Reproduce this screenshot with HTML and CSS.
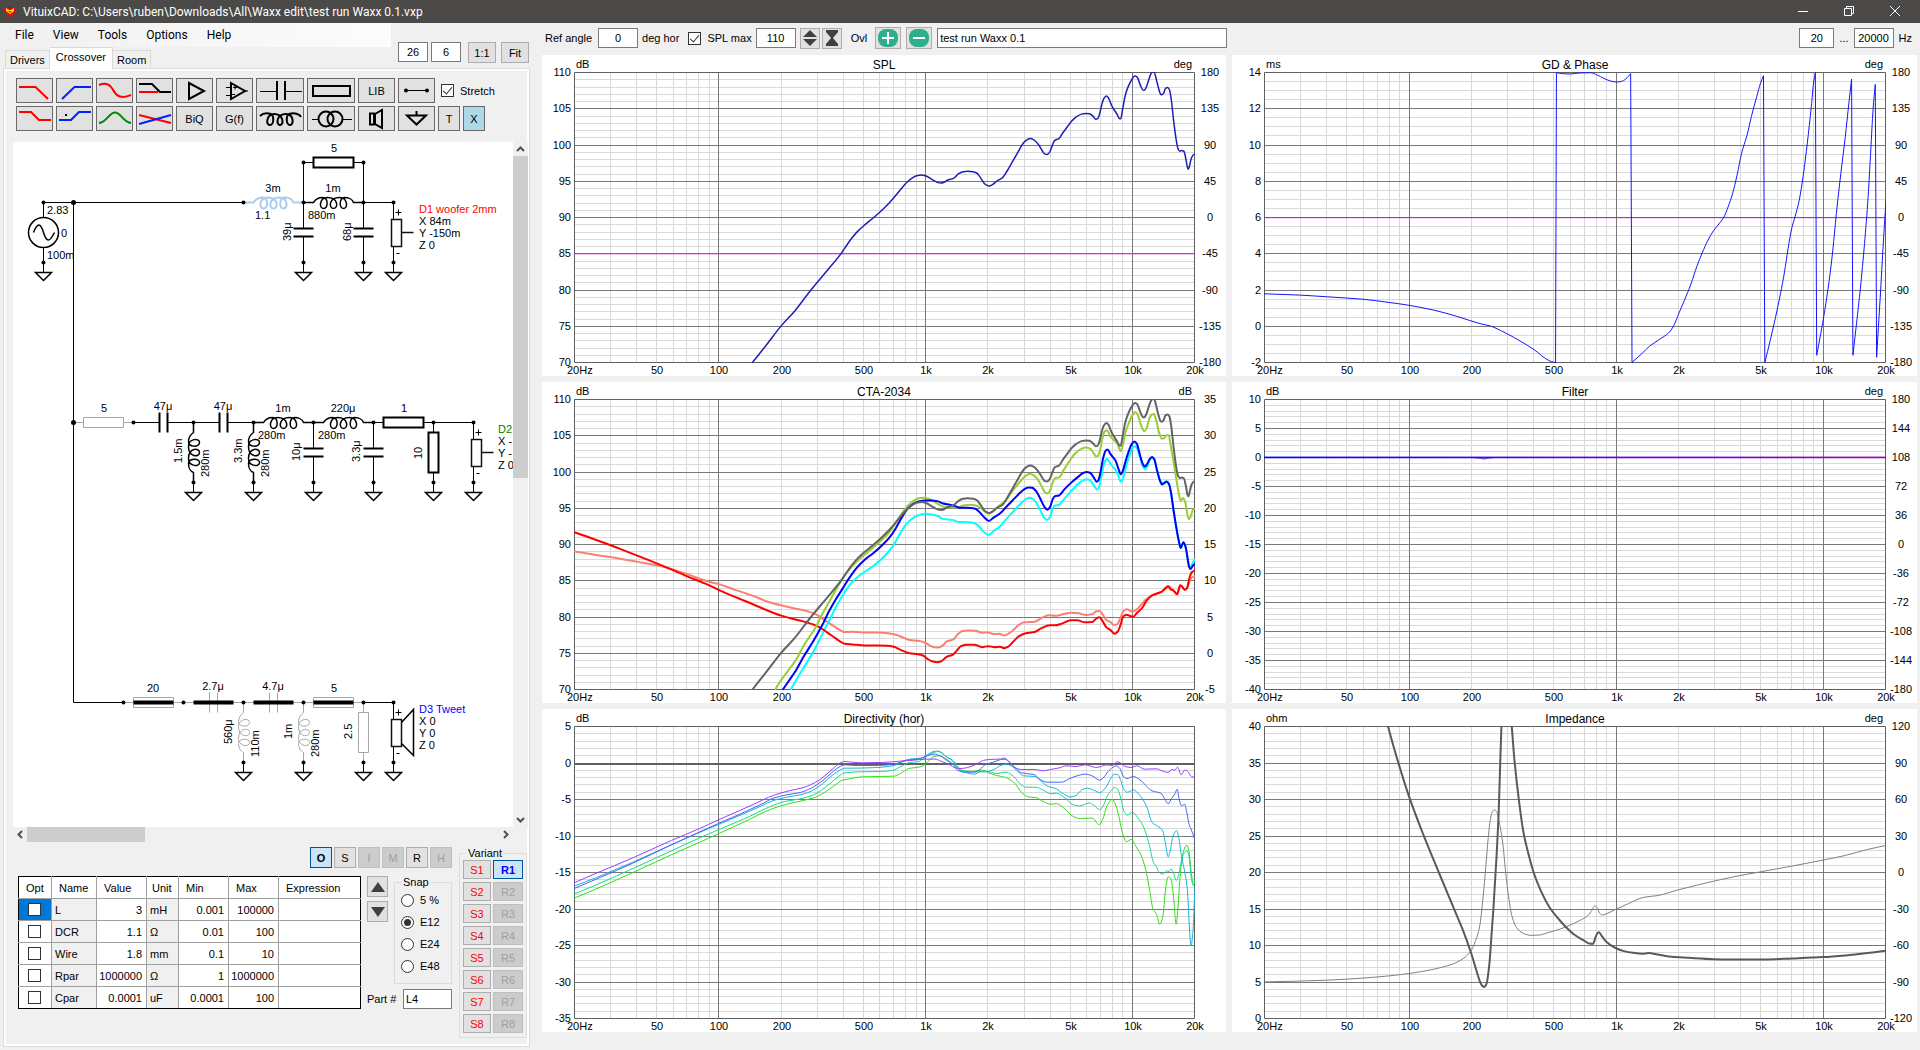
FILE: index.html
```html
<!DOCTYPE html>
<html lang="en">
<head>
<meta charset="utf-8">
<title>VituixCAD</title>
<link rel="stylesheet" href="styles.css">
</head>
<body>
<header class="titlebar">
  <svg class="logo" viewBox="0 0 14 12" width="14" height="12" aria-hidden="true"><path d="M3 1H11L14 4L7 12L0 4Z" fill="#d8140c"/><path d="M3 2L6 4H8L11 2V5L7 8L3 5Z" fill="#ffd820"/><path d="M5 1L7 3L9 1Z" fill="#a80808"/><path d="M5 5H9L7 7Z" fill="#e83008"/></svg>
  <h1>VituixCAD: C:\Users\ruben\Downloads\All\Waxx edit\test run Waxx 0.1.vxp</h1>
  <div class="window-buttons">
    <button aria-label="Minimize"><svg width="10" height="10"><path d="M0 5.500H10"/></svg></button>
    <button aria-label="Restore"><svg width="10" height="10"><path d="M.5 2.500H7.500V9.500H.5ZM2.500 2.500V.5H9.500V7.500H7.500"/></svg></button>
    <button aria-label="Close"><svg width="10" height="10"><path d="M0 0L10 10M10 0L0 10"/></svg></button>
  </div>
</header>

<main class="app">
  <section class="editor">
    <div class="editor-head">
      <div class="nav-column">
        <nav class="menubar"><a href="#">File</a><a href="#">View</a><a href="#">Tools</a><a href="#">Options</a><a href="#">Help</a></nav>
        <div class="tabs"><button>Drivers</button><button class="active">Crossover</button><button>Room</button></div>
      </div>
      <div class="zoom-tools">
        <input class="field num" aria-label="Grid columns" value="26">
        <input class="field num" aria-label="Grid size" value="6">
        <button class="btn">1:1</button>
        <button class="btn">Fit</button>
      </div>
    </div>

    <div class="panel">
      <div class="toolbar">
        <button aria-label="Low pass"><svg viewBox="1 1 35 23"><path class="red" d="M3 9H19.500L32 21"/></svg></button>
        <button aria-label="High pass"><svg viewBox="1 1 35 23"><path class="blue" d="M6 21L18.500 9H35"/></svg></button>
        <button aria-label="Shelf"><svg viewBox="1 1 35 23"><path class="red" d="M3 7C8 5 12 5 15 9C19 14 20 19 27 19C30 19 32 18 35 17"/></svg></button>
        <button aria-label="Shelving filter"><svg viewBox="1 1 35 23"><path class="red" d="M3 14H22"/><path d="M3 6H16L24 14H35"/></svg></button>
        <button aria-label="Buffer"><svg viewBox="1 1 35 23"><path d="M13 5L28 13L13 21Z"/></svg></button>
        <button aria-label="Op amp"><svg viewBox="1 1 35 23"><path d="M15 5L29 13L15 21Z"/><path class="fine" d="M29 13H32M10 9.500H15M10 17.500H15M17 9.500H21M19 7.500V11.500M16 16.500H19"/></svg></button>
        <button aria-label="Capacitor"><svg viewBox="1 1 46 23"><path d="M21 3V22M29 3V22"/><path class="fine" d="M4 13.500H21M29 13.500H46"/></svg></button>
        <button aria-label="Resistor"><svg viewBox="1 1 46 23"><path d="M6 8H43V18H6Z"/></svg></button>
        <button>LIB</button>
        <button aria-label="Wire"><svg viewBox="1 1 35 23"><path class="fine" d="M8 12.500H29"/><circle class="dot" cx="8" cy="12.500" r="2"/><circle class="dot" cx="29" cy="12.500" r="2"/></svg></button>
        <label class="check stretch"><input type="checkbox" checked>Stretch</label>
        <button aria-label="Low shelf"><svg viewBox="1 1 35 23"><path class="red" d="M3 6H15L23 14H35"/></svg></button>
        <button aria-label="High shelf"><svg viewBox="1 1 35 23"><path class="blue" d="M3 14H15L23 6H35"/><rect class="dot" x="9" y="8" width="2" height="2"/></svg></button>
        <button aria-label="Peak"><svg viewBox="1 1 35 23"><path class="green" d="M3 17C11 16 13 6.500 19 6.500C25 6.500 27 16 35 17"/></svg></button>
        <button aria-label="Phase"><svg viewBox="1 1 35 23"><path class="red" d="M3 9L35 17"/><path class="blue" d="M3 18L35 9"/></svg></button>
        <button>BiQ</button>
        <button>G(f)</button>
        <button aria-label="Inductor"><svg viewBox="1 1 46 23"><path class="fine heavy" d="M4 10C6 8 10 7 13 7.500C19 8 18 19 14 19C9 19 11 8 18 8C28 8 28 19 24 19C20 19 20 8 30 8C38 8 38 19 34 19C30 19 29 8 35 7.500C39 7 44 8 45 11"/></svg></button>
        <button aria-label="Transformer"><svg viewBox="1 1 46 23"><circle cx="19" cy="13" r="7.500"/><circle cx="28" cy="13" r="7.500"/><path class="fine" d="M5 13.500H12M35 13.500H45"/></svg></button>
        <button aria-label="Driver"><svg viewBox="1 1 35 23"><path d="M12 7.500H16V18.500H12ZM17 8L24 4V22L17 18Z"/></svg></button>
        <button aria-label="Ground"><svg viewBox="1 1 35 23"><path d="M9 9.500H28L18.500 18.500ZM18.500 5V9"/></svg></button>
        <div class="pair"><button>T</button><button class="on">X</button></div>
      </div>

      <div class="viewport">
        <svg class="schematic" role="img" aria-label="Crossover schematic">
          <defs>
            <g id="coil"><path d="M0 0H10C12 -3 16 -5 19 -5C25 -5 25 6 20 6C15 6 16 -5 24 -5C35 -5 35 6 30 6C25 6 25 -5 36 -5C44 -5 45 6 40 6C35 6 36 -5 41 -5C45 -5 49 -3 50 0H60"/></g>
            <g id="res"><path class="wire" d="M0 0H10M50 0H60"/><path class="body" d="M10 -5H50V5H10Z"/></g>
            <g id="cap"><path class="wire" d="M0 0H26M34 0H60"/><path class="body" d="M26 -10V10M34 -10V10"/></g>
            <g id="gnd"><circle class="node" r="2"/><path class="wire" d="M0 0V10"/><path class="tri" d="M-8 10H8L0 18Z"/></g>
            <g id="drv"><path class="wire" d="M0 0V17M0 44V60"/><path class="box" d="M-2 17H8V44H-2Z"/><path class="wire" d="M2 10H8M5 7V13M3 51H6"/></g>
            <g id="stub"><path class="box" d="M8 30H20"/></g>
            <g id="cone"><path class="tri" d="M8 20L20 7V53L8 41"/></g>
          </defs>
          <g transform="translate(.5 .5)">
            <path class="wire" d="M30 60H230M60 60V560H110M290 60V20H300M340 20H350V60H380M420 280H460M350 560H380M30 60V75M30 105V120"/>
            <circle class="tri" cx="30" cy="90" r="15"/><path class="tri" d="M20 90C24 80 27 80 30 90C33 100 36 100 41 90"/>
            <path class="body" d="M300 15H340V25H300Z"/>

            <use href="#coil" class="coil picked" x="230" y="60"/>
            <use href="#coil" class="coil" x="290" y="60"/>
            <use href="#cap" transform="translate(290 60) rotate(90)"/>
            <use href="#cap" transform="translate(350 60) rotate(90)"/>
            <use href="#drv" x="380" y="60"/><use href="#stub" x="380" y="60"/>

            <g class="off"><use href="#res" x="60" y="280"/></g>
            <use href="#cap" x="120" y="280"/><use href="#cap" x="180" y="280"/>
            <use href="#coil" class="coil" x="240" y="280"/><use href="#coil" class="coil" x="300" y="280"/>
            <use href="#res" x="360" y="280"/>
            <use href="#coil" class="coil" transform="translate(180 280) rotate(90) scale(1 -1)"/>
            <use href="#coil" class="coil" transform="translate(240 280) rotate(90) scale(1 -1)"/>
            <use href="#cap" transform="translate(300 280) rotate(90)"/>
            <use href="#cap" transform="translate(360 280) rotate(90)"/>
            <use href="#res" transform="translate(420 280) rotate(90)"/>
            <use href="#drv" x="460" y="280"/><use href="#stub" x="460" y="280"/>

            <g class="off">
              <use href="#res" x="110" y="560"/><use href="#cap" x="170" y="560"/><use href="#cap" x="230" y="560"/><use href="#res" x="290" y="560"/>
              <use href="#coil" class="coil" transform="translate(230 560) rotate(90) scale(1 -1)"/>
              <use href="#coil" class="coil" transform="translate(290 560) rotate(90) scale(1 -1)"/>
              <use href="#res" transform="translate(350 560) rotate(90)"/>
            </g>
            <path class="short" d="M120 560H160M180 560H220M240 560H280M300 560H340"/>
            <use href="#drv" x="380" y="560"/><use href="#cone" x="380" y="560"/>

            <use href="#gnd" x="30" y="120"/><use href="#gnd" x="290" y="120"/><use href="#gnd" x="350" y="120"/><use href="#gnd" x="380" y="120"/>
            <use href="#gnd" x="180" y="340"/><use href="#gnd" x="240" y="340"/><use href="#gnd" x="300" y="340"/><use href="#gnd" x="360" y="340"/><use href="#gnd" x="420" y="340"/><use href="#gnd" x="460" y="340"/>
            <use href="#gnd" x="230" y="620"/><use href="#gnd" x="290" y="620"/><use href="#gnd" x="350" y="620"/><use href="#gnd" x="380" y="620"/>
            <g class="node">
              <circle cx="30" cy="60" r="2"/><circle cx="60" cy="60" r="2.500"/><circle cx="230" cy="60" r="2"/><circle cx="290" cy="60" r="2"/><circle cx="350" cy="60" r="2"/><circle cx="380" cy="60" r="2"/><circle cx="290" cy="20" r="2"/><circle cx="350" cy="20" r="2"/>
              <circle cx="60" cy="280" r="2.500"/><circle cx="120" cy="280" r="2"/><circle cx="180" cy="280" r="2"/><circle cx="240" cy="280" r="2"/><circle cx="300" cy="280" r="2"/><circle cx="360" cy="280" r="2"/><circle cx="420" cy="280" r="2"/><circle cx="460" cy="280" r="2"/>
              <circle cx="110" cy="560" r="2"/><circle cx="170" cy="560" r="2"/><circle cx="230" cy="560" r="2"/><circle cx="290" cy="560" r="2"/><circle cx="350" cy="560" r="2"/><circle cx="380" cy="560" r="2"/>
            </g>
          </g>
          <g class="mid">
            <text x="321" y="10">5</text><text x="260" y="50">3m</text><text x="320" y="50">1m</text>
            <text x="91" y="270">5</text><text x="150" y="268">47μ</text><text x="210" y="268">47μ</text><text x="270" y="270">1m</text><text x="330" y="270">220μ</text><text x="391" y="270">1</text>
            <text x="140" y="550">20</text><text x="200" y="548">2.7μ</text><text x="260" y="548">4.7μ</text><text x="321" y="550">5</text>
          </g>
          <text x="34" y="72">2.83</text><text x="48" y="95">0</text><text x="34" y="117">100m</text>
          <text x="242" y="77">1.1</text><text x="295" y="77">880m</text><text x="245" y="297">280m</text><text x="305" y="297">280m</text>
          <text transform="translate(278 99) rotate(-90)">39μ</text><text transform="translate(338 99) rotate(-90)">68μ</text>
          <text transform="translate(169 321) rotate(-90)">1.5m</text><text transform="translate(196 335) rotate(-90)">280m</text>
          <text transform="translate(229 321) rotate(-90)">3.3m</text><text transform="translate(256 335) rotate(-90)">280m</text>
          <text transform="translate(287 319) rotate(-90)">10μ</text><text transform="translate(347 320) rotate(-90)">3.3μ</text><text transform="translate(409 317) rotate(-90)">10</text>
          <text transform="translate(219 602) rotate(-90)">560μ</text><text transform="translate(246 615) rotate(-90)">110m</text>
          <text transform="translate(279 597) rotate(-90)">1m</text><text transform="translate(306 615) rotate(-90)">280m</text><text transform="translate(339 597) rotate(-90)">2.5</text>
          <text class="d1" x="406" y="71">D1 woofer 2mm</text><text x="406" y="83">X 84m</text><text x="406" y="95">Y -150m</text><text x="406" y="107">Z 0</text>
          <text class="d2" x="485" y="291">D2</text><text x="485" y="303">X -</text><text x="485" y="315">Y -</text><text x="485" y="327">Z 0</text>
          <text class="d3" x="406" y="571">D3 Tweet</text><text x="406" y="583">X 0</text><text x="406" y="595">Y 0</text><text x="406" y="607">Z 0</text>
        </svg>
        <div class="scroll vertical">
          <button aria-label="Scroll up"><svg width="9" height="6"><path d="M1 5L4.500 1.500L8 5"/></svg></button>
          <div class="track"><div class="thumb"></div></div>
          <button aria-label="Scroll down"><svg width="9" height="6"><path d="M1 1L4.500 4.500L8 1"/></svg></button>
        </div>
        <div class="scroll horizontal">
          <button aria-label="Scroll left"><svg width="6" height="9"><path d="M5 1L1.500 4.500L5 8"/></svg></button>
          <div class="track"><div class="thumb"></div></div>
          <button aria-label="Scroll right"><svg width="6" height="9"><path d="M1 1L4.500 4.500L1 8"/></svg></button>
        </div>
      </div>

      <div class="details">
        <div class="part">
          <div class="modes"><button class="btn picked">O</button><button class="btn">S</button><button class="btn" disabled>I</button><button class="btn" disabled>M</button><button class="btn">R</button><button class="btn" disabled>H</button></div>
          <div class="part-row">
            <table class="params">
              <colgroup><col class="c-opt"><col class="c-name"><col class="c-val"><col class="c-unit"><col class="c-val"><col class="c-val"><col></colgroup>
              <thead><tr><th>Opt</th><th>Name</th><th>Value</th><th>Unit</th><th>Min</th><th>Max</th><th>Expression</th></tr></thead>
              <tbody>
                <tr><td class="opt current"><input type="checkbox" aria-label="Optimize L"></td><td class="fixed">L</td><td class="n">3</td><td class="fixed">mH</td><td class="n">0.001</td><td class="n">100000</td><td></td></tr>
                <tr><td class="opt"><input type="checkbox" aria-label="Optimize DCR"></td><td class="fixed">DCR</td><td class="n">1.1</td><td class="fixed">Ω</td><td class="n">0.01</td><td class="n">100</td><td></td></tr>
                <tr><td class="opt"><input type="checkbox" aria-label="Optimize Wire"></td><td class="fixed">Wire</td><td class="n">1.8</td><td class="fixed">mm</td><td class="n">0.1</td><td class="n">10</td><td></td></tr>
                <tr><td class="opt"><input type="checkbox" aria-label="Optimize Rpar"></td><td class="fixed">Rpar</td><td class="n">1000000</td><td class="fixed">Ω</td><td class="n">1</td><td class="n">1000000</td><td></td></tr>
                <tr><td class="opt"><input type="checkbox" aria-label="Optimize Cpar"></td><td class="fixed">Cpar</td><td class="n">0.0001</td><td class="fixed">uF</td><td class="n">0.0001</td><td class="n">100</td><td></td></tr>
              </tbody>
            </table>
            <div class="part-side">
              <div class="step-snap">
                <div class="steps">
                  <button class="btn" aria-label="Step up"><svg width="14" height="10"><path d="M7 0L14 10H0Z"/></svg></button>
                  <button class="btn" aria-label="Step down"><svg width="14" height="10"><path d="M0 0H14L7 10Z"/></svg></button>
                </div>
                <fieldset class="snap">
                  <legend>Snap</legend>
                  <label><input type="radio" name="snap">5 %</label>
                  <label><input type="radio" name="snap" checked>E12</label>
                  <label><input type="radio" name="snap">E24</label>
                  <label><input type="radio" name="snap">E48</label>
                </fieldset>
              </div>
              <label class="part-no">Part # <input class="field" value="L4"></label>
            </div>
          </div>
        </div>
        <fieldset class="variant">
          <legend>Variant</legend>
          <button class="btn store">S1</button><button class="btn recall picked">R1</button>
          <button class="btn store">S2</button><button class="btn" disabled>R2</button>
          <button class="btn store">S3</button><button class="btn" disabled>R3</button>
          <button class="btn store">S4</button><button class="btn" disabled>R4</button>
          <button class="btn store">S5</button><button class="btn" disabled>R5</button>
          <button class="btn store">S6</button><button class="btn" disabled>R6</button>
          <button class="btn store">S7</button><button class="btn" disabled>R7</button>
          <button class="btn store">S8</button><button class="btn" disabled>R8</button>
        </fieldset>
      </div>
    </div>
  </section>

  <section class="results">
    <div class="options">
      <label for="angle">Ref angle</label><input id="angle" class="field num" value="0"><span class="after">deg hor</span>
      <label class="check"><input type="checkbox" checked>SPL max</label><input class="field num spl" aria-label="SPL max value" value="110">
      <button class="btn small" aria-label="Span"><svg width="14" height="16"><path d="M7 0L14 7H0ZM0 9H14L7 16Z"/></svg></button>
      <button class="btn small" aria-label="Fit span"><svg width="14" height="16"><path d="M1 0H13V2L8 8L13 14V16H1V14L6 8L1 2Z"/></svg></button>
      <span class="ovl">Ovl</span>
      <button class="btn overlay" aria-label="Add overlay"><svg width="20" height="18"><rect width="20" height="18" rx="8"/><path d="M10 3V15M4 9H16"/></svg></button>
      <button class="btn overlay" aria-label="Remove overlay"><svg width="20" height="18"><rect width="20" height="18" rx="8"/><path d="M4 9H16"/></svg></button>
      <input class="field project" aria-label="Overlay name" value="test run Waxx 0.1">
      <div class="range"><input class="field num low" aria-label="Lowest frequency" value="20"><span>...</span><input class="field num high" aria-label="Highest frequency" value="20000"><span>Hz</span></div>
    </div>
    <div class="charts">
      <figure id="spl"></figure><figure id="phase"></figure>
      <figure id="cta"></figure><figure id="filter"></figure>
      <figure id="directivity"></figure><figure id="impedance"></figure>
    </div>
  </section>
</main>
<script src="charts.js"></script>
</body>
</html>
```
FILE: styles.css
```css
* { box-sizing: border-box; }
body {
  margin: 0;
  min-height: 100vh;
  display: flex;
  flex-direction: column;
  background: #f0f0f0;
  color: #000;
  font: 11px/14px "Liberation Sans", Arial, sans-serif;
}
button, input { font: inherit; color: inherit; }
button { padding: 0; display: flex; align-items: center; justify-content: center; }
fieldset, figure { margin: 0; padding: 0; min-width: 0; }

.titlebar { height: 23px; background: #4b4a48; color: #fff; display: flex; align-items: center; padding-left: 3px; }
.titlebar h1 { margin: 0 0 0 6px; font: 12px/16px Roboto, "Open Sans", sans-serif; }
.window-buttons { margin-left: auto; display: flex; padding: 0 2px 2px 0; }
.window-buttons button { width: 46px; height: 20px; background: none; border: 0; }
.window-buttons svg { fill: none; stroke: #fff; }

.app { flex: 1; display: flex; min-height: 0; }
.editor { width: 542px; flex: none; display: flex; flex-direction: column; padding: 0 12px 3px 3px; }

.editor-head { display: flex; height: 46px; }
.nav-column { width: 388px; display: flex; flex-direction: column; justify-content: space-between; }
.menubar { height: 24px; display: flex; gap: 19px; padding-left: 15px; margin-left: -3px; background: linear-gradient(90deg, #f0f0f0, #fcfcfc); font: 12px/24px Roboto, "Open Sans", sans-serif; }
.menubar a { color: #000; text-decoration: none; }
.tabs { display: flex; align-items: flex-end; padding-left: 2px; }
.tabs button { height: 19px; padding: 0 4px; background: #f0f0f0; border: 1px solid #d9d9d9; border-left-width: 0; }
.tabs button:first-child { border-left-width: 1px; }
.tabs button.active { height: 22px; padding: 0 6px 3px; background: #fff; border-bottom: 0; z-index: 1; }
.zoom-tools { display: flex; gap: 3px; padding: 19px 0 0 7px; flex: 1; }
.zoom-tools input { width: 30px; height: 20px; }
.zoom-tools button { width: 28px; height: 21px; margin-left: 4px; }
.zoom-tools button:last-child { margin-left: 2px; }

.field { background: #fff; border: 1px solid #7a7a7a; padding: 0 2px; height: 20px; border-radius: 0; outline: 0; }
.num { text-align: center; }
.btn { background: #e1e1e1; border: 1px solid #adadad; border-radius: 0; }
.btn:disabled { background: #ccc; border-color: #bfbfbf; color: #a0a0a0; }
.btn.picked { background: #cce4f7; border-color: #00549a; font-weight: bold; }

.panel { flex: 1; display: flex; flex-direction: column; border: 1px solid #dcdcdc; margin-top: -1px; box-shadow: inset 0 0 0 2px #fff; }
.toolbar { display: grid; grid-template-columns: repeat(6, 37px) 48px 48px 37px 37px 1fr; grid-auto-rows: 25px; gap: 3px; padding: 9px 12px 0; }
.toolbar button { background: #e1e1e1; border: 1px solid #696969; height: 25px; }
.toolbar svg { width: 100%; height: 100%; fill: none; stroke: #000; stroke-width: 2; }
.toolbar .fine { stroke-width: 1; }
.toolbar .heavy { stroke-width: 2; }
.toolbar .dot { fill: #000; stroke: none; }
.toolbar .red { stroke: #f00; }
.toolbar .blue { stroke: #0020ff; }
.toolbar .green { stroke: #008a00; }
.pair { display: flex; gap: 3px; }
.pair button { width: 22px; }
.toolbar .on { background: #add8e6; }
.check { display: flex; align-items: center; gap: 6px; }
.stretch { padding-left: 3px; }

input[type="checkbox"], input[type="radio"] { appearance: none; flex: none; width: 13px; height: 13px; margin: 0; background: #fff; border: 1px solid #333; display: grid; place-items: center; }
input[type="checkbox"]:checked::after { content: ""; width: 4px; height: 8px; margin-bottom: 2px; border: solid #333; border-width: 0 1px 1px 0; rotate: 40deg; }
input[type="radio"] { border-radius: 50%; }
input[type="radio"]:checked::after { content: ""; width: 7px; height: 7px; border-radius: 50%; background: #333; }

.viewport { flex: 1; display: grid; grid-template: minmax(0, 1fr) 15px / minmax(0, 1fr) 15px; margin: 11px 1px 0 9px; min-height: 680px; }
.schematic { width: 100%; height: 100%; background: #fff; overflow: hidden; }
.schematic path, .schematic circle { fill: none; }
.off { --line: #a6a6a6; --w: 1; }
.wire { stroke: var(--line, #000); }
.body { stroke: var(--line, #000); stroke-width: var(--w, 2); }
.coil, .tri { stroke: #000; stroke-width: 1.500px; }
.box { stroke: #111; stroke-width: 1.500px; }
.short { stroke: #000; stroke-width: 4; }
.picked.coil { stroke: #a9cdf0; stroke-width: 2; }
.off .coil { stroke: #a6a6a6; stroke-width: 1; }
.schematic circle.node, .schematic .node circle { fill: #000; }
.mid { text-anchor: middle; }
.d1 { fill: #f00; }
.d2 { fill: #008000; }
.d3 { fill: #00f; }

.scroll { display: flex; background: #f0f0f0; }
.scroll.vertical { flex-direction: column; }
.scroll button { flex: none; width: 15px; height: 14px; background: none; border: 0; }
.scroll.horizontal button { width: 14px; height: 15px; }
.scroll svg { fill: none; stroke: #505050; stroke-width: 2; }
.track { flex: 1; }
.thumb { background: #cdcdcd; }
.vertical .thumb { height: 49%; }
.horizontal .thumb { width: 25%; height: 15px; }

.details { display: flex; justify-content: space-between; padding: 5px 2px 8px 14px; }
.part { width: 434px; }
.modes { display: flex; justify-content: flex-end; gap: 2px; }
.modes button { width: 22px; height: 21px; }
.part-row { display: flex; justify-content: space-between; margin-top: 8px; }
.params { width: 343px; border-collapse: collapse; table-layout: fixed; border: 1px solid #000; background: #fff; }
.params th, .params td { height: 22px; padding: 0 4px; border: 1px solid #a0a0a0; font-weight: normal; text-align: left; white-space: nowrap; }
.params tr > :first-child { border-left-color: #000; }
.params tr > :last-child { border-right-color: #000; }
.params thead th { border-top-color: #000; padding: 0 7px; }
.params tbody tr:last-child td { border-bottom-color: #000; }
.params td.n { text-align: right; padding: 0 4px 0 0; }
.params td.fixed { background: #f0f0f0; padding: 0 2px 0 3px; }
.params td.opt { padding: 0 0 0 9px; }
.params td.current { background: #0078d7; }
.c-opt { width: 33px; }
.c-name { width: 45px; }
.c-val { width: 50px; }
.c-unit { width: 32px; }
.params thead th:nth-child(4) { padding: 0 5px; }

.part-side { width: 85px; display: flex; flex-direction: column; justify-content: space-between; }
.step-snap { display: flex; justify-content: space-between; }
.steps { display: flex; flex-direction: column; gap: 4px; }
.steps button { width: 21px; height: 21px; }
.steps svg, .small svg { fill: #404040; }
.snap, .variant { border: 1px solid #dcdcdc; }
.snap { width: 58px; height: 108px; padding: 1px 6px 0; }
.snap legend, .variant legend { padding: 0 2px; line-height: 12px; }
.snap label { display: flex; align-items: center; gap: 6px; height: 22px; }
.part-no { display: flex; align-items: center; justify-content: space-between; }
.part-no input { width: 49px; }
.variant { width: 68px; padding: 1px 3px 4px; display: grid; grid-template-columns: 28px 30px; grid-auto-rows: 19px; gap: 3px 2px; }
.variant legend { margin-left: 3px; }
.variant .store { color: #f00; }
.variant .recall { color: #00f; }

.results { flex: 1; min-width: 0; display: flex; flex-direction: column; padding: 0 3px 18px 0; }
.options { height: 32px; display: flex; align-items: center; padding: 0 5px 2px 3px; }
.options label[for="angle"] { margin-right: 6px; }
.options .num { width: 40px; }
.after { margin: 0 9px 0 4px; }
.options .spl { margin: 0 4px; }
.small { width: 20px; height: 21px; margin-right: 2px; }
.ovl { margin: 0 8px 0 7px; }
.overlay { width: 26px; height: 22px; margin-right: 5px; }
.overlay rect { fill: #2fae8c; }
.overlay path { stroke: #fff; stroke-width: 2; }
.project { width: 290px; }
.range { margin-left: auto; display: flex; align-items: center; gap: 5px; }
.options .low { width: 35px; }

.charts { flex: 1; display: grid; grid-template: minmax(240px, 321fr) minmax(240px, 321fr) minmax(240px, 323fr) / minmax(0, 684fr) minmax(0, 685fr); gap: 6px; }
.charts figure { background: #fff; overflow: hidden; }
.charts svg { display: block; }
.grid-minor { stroke: #d9d9d9; fill: none; }
.grid-major { stroke: #787878; fill: none; }
.frame { stroke: #606060; fill: none; }
.zero { stroke: #606060; stroke-width: 2; }
.chart-title { font-size: 12px; text-anchor: middle; }
.axis-right, .axis-bottom { text-anchor: middle; }
.axis-left, .unit-right { text-anchor: end; }
.curve { fill: none; vector-effect: non-scaling-stroke; stroke-linejoin: round; }
```
FILE: charts.js
```js
const NS = 'http://www.w3.org/2000/svg';

// Each curve is a list of runs; a run is "x,y x,y ..." in the units of its view box.
const onAxis = ['498,1087 530,1033 563,976 593,932 630,868 665,812 697,760 708,738 722,712 735,692 750,674 770,652 790,628 805,608 818,588 830,568 845,546 858,532 866,527 877,525 887,528 900,538 912,547 920,549 928,546 935,540 948,535 960,521 970,515 980,514 992,515 1000,519 1008,532 1020,554 1028,558 1036,553 1045,543 1058,533 1068,513 1080,485 1092,457 1104,430 1112,420 1120,416 1128,420 1138,434 1146,451 1152,462 1157,464 1163,457 1169,437 1174,422 1178,419 1184,416 1192,400 1202,382 1212,364 1222,352 1234,343 1244,341 1252,342 1260,349 1266,358 1270,357 1274,346 1279,318 1284,297 1290,289 1294,293 1302,318 1314,344 1319,356 1322,357 1326,330 1332,288 1338,263 1346,241 1351,231 1355,229 1359,233 1366,257 1371,270 1374,272 1378,266 1384,243 1388,227 1392,218 1397,218 1401,236 1407,268 1411,283 1414,285 1418,280 1422,266 1427,263 1431,270 1435,300 1440,360 1446,420 1450,446 1454,454 1458,452 1463,454 1468,480 1471,502 1473,508 1476,496 1480,474 1485,464 1488,463'];

const charts = [
  { id: 'spl', title: 'SPL', units: ['dB', 'deg'], left: [110, -5, 9], right: [180, -45, 9], minor: 5, box: [100, 217, 1388, 870],
    curves: [
      { color: '#d62ad6', runs: ['100,760.500 1488,760.500'] },
      { color: '#1e1eb4', width: 1.5, runs: onAxis }
    ] },
  { id: 'phase', title: 'GD & Phase', units: ['ms', 'deg'], left: [14, -2, 9], right: [180, -45, 9], minor: 4, box: [100, 217, 1391, 870],
    curves: [
      { color: '#e800e8', runs: ['100,652.500 1491,652.500'] },
      { color: '#1414ff', joined: true, runs: [
        '100,880 180,884 240,889 318,896 380,906 422,914 480,929 530,947 585,970 605,976 640,997 675,1023 705,1048 730,1074 743,1083 752,1086',
        '754,219 768,222 785,223 805,220 830,219 845,226 860,236 875,244 890,247 902,244 912,234 920,222',
        '923,1085 945,1059 962,1037 985,1016 1005,997 1016,976 1028,938 1040,900 1055,850 1068,798 1080,758 1092,722 1105,692 1120,667 1128,652 1138,620 1148,580 1158,525 1168,460 1180,407 1190,350 1202,290 1210,252 1217,228',
        '1220,1086 1232,1020 1244,950 1255,880 1264,815 1272,745 1280,685 1288,648 1297,600 1306,525 1315,430 1324,320 1329,250 1333,219',
        '1336,1064 1345,1000 1354,930 1364,840 1372,750 1380,640 1390,520 1400,410 1408,310 1414,238',
        '1417,1064 1425,970 1434,860 1443,730 1451,590 1457,450 1462,330 1467,254',
        '1470,1070 1474,980 1479,870 1484,750 1491,600'] }
    ] },
  { id: 'cta', title: 'CTA-2034', units: ['dB', 'dB'], left: [110, -5, 9], right: [35, -5, 9], minor: 5, box: [100, 73, 1388, 869],
    curves: [
      { color: '#fa8072', width: 2, runs: ['100,528 150,539 200,549 250,561 300,574 350,595 400,618 422,625 460,643 500,661 535,679 563,689 600,700 625,708 645,719 665,738 685,755 705,769 722,768 745,770 780,770 805,773 820,777 835,785 850,793 870,795 885,801 895,809 905,814 915,815 925,808 933,797 948,791 958,775 968,766 980,764 998,765 1012,771 1026,770 1038,775 1050,774 1062,779 1072,773 1082,763 1094,748 1106,740 1130,738 1145,727 1160,719 1178,720 1195,715 1212,711 1228,713 1244,718 1258,716 1268,707 1275,706 1282,717 1290,733 1300,740 1307,748 1314,746 1321,728 1328,706 1335,701 1348,708 1356,703 1366,690 1378,672 1393,659 1413,649 1428,632 1440,645 1448,656 1455,629 1465,643 1470,638 1480,607 1488,602'] },
      { color: '#00ffff', width: 2, runs: ['584,942 600,905 620,861 640,815 655,775 672,730 688,688 705,650 720,622 738,600 757,583 778,562 797,538 815,508 830,472 843,446 856,430 870,420 885,416 900,418 912,422 925,431 945,434 960,440 980,441 995,444 1005,453 1016,470 1027,479 1038,467 1052,454 1065,433 1080,412 1094,391 1106,376 1117,368 1126,372 1134,384 1143,407 1151,428 1158,434 1164,425 1170,400 1175,391 1184,389 1196,371 1212,347 1228,325 1238,316 1246,313 1254,317 1262,331 1269,343 1273,338 1278,309 1284,270 1288,255 1292,252 1300,268 1310,284 1317,303 1322,320 1327,310 1334,275 1342,240 1349,218 1354,214 1359,222 1366,252 1371,273 1376,283 1381,275 1387,254 1392,247 1397,254 1403,285 1410,315 1416,325 1424,318 1430,325 1434,350 1440,405 1446,455 1452,498 1456,518 1462,501 1467,515 1471,545 1475,573 1478,578 1482,565 1488,551'] },
      { color: '#ff0000', width: 2, runs: ['100,471 150,494 200,519 250,545 300,572 350,601 400,628 422,642 460,664 500,686 535,706 563,720 590,730 620,740 645,752 665,769 685,788 705,804 722,806 750,809 780,809 800,810 815,813 830,822 850,832 868,835 880,839 890,849 900,856 912,859 920,857 933,843 947,836 955,825 965,811 978,807 995,807 1012,814 1026,811 1040,814 1052,813 1062,817 1070,813 1080,800 1094,782 1108,773 1130,769 1145,757 1163,749 1175,749 1190,744 1210,734 1225,734 1242,740 1258,739 1268,728 1274,725 1280,733 1290,755 1300,764 1308,774 1315,768 1321,750 1328,722 1335,717 1343,721 1350,723 1358,712 1370,697 1380,675 1393,659 1403,654 1413,649 1423,637 1428,632 1434,642 1440,645 1448,656 1455,629 1460,634 1465,643 1470,638 1476,605 1481,590 1488,585'] },
      { color: '#9acd32', width: 2, runs: ['549,942 563,912 580,882 597,850 615,806 640,755 655,715 675,668 690,632 705,600 722,572 737,552 757,530 780,503 800,478 815,452 830,420 842,398 856,380 867,371 880,368 892,371 903,378 918,390 930,396 945,397 958,396 970,391 985,389 998,391 1008,397 1018,409 1026,416 1034,410 1050,392 1065,376 1078,351 1092,328 1104,309 1112,300 1120,296 1128,301 1138,316 1146,336 1153,352 1158,355 1164,347 1170,322 1176,309 1184,307 1195,284 1208,257 1220,236 1234,222 1244,218 1254,222 1262,236 1267,245 1271,243 1276,225 1281,190 1286,170 1291,167 1300,187 1314,205 1319,222 1322,229 1326,215 1332,175 1340,145 1348,122 1354,112 1359,118 1366,145 1371,163 1375,169 1380,160 1386,131 1391,120 1396,118 1401,135 1408,175 1414,192 1419,190 1424,181 1429,181 1434,215 1440,260 1446,310 1451,350 1456,378 1461,369 1466,380 1470,410 1474,432 1478,425 1483,405 1488,400'] },
      { color: '#0000ff', width: 2, runs: ['566,942 580,915 596,884 613,843 634,798 655,748 670,707 685,672 700,640 715,608 730,580 748,555 770,532 790,508 803,490 818,462 832,428 845,402 858,386 870,379 885,376 900,376 912,378 925,385 940,389 952,393 962,398 980,398 995,400 1005,409 1016,425 1027,437 1037,428 1052,415 1065,397 1080,376 1094,357 1106,343 1115,337 1124,338 1134,350 1143,373 1151,394 1158,404 1164,396 1170,372 1175,363 1184,361 1196,343 1212,322 1228,304 1238,294 1246,291 1254,294 1262,308 1268,320 1272,316 1277,290 1283,248 1288,228 1292,224 1300,239 1310,256 1317,282 1322,298 1326,290 1333,258 1341,225 1348,205 1353,200 1358,207 1365,240 1371,266 1376,275 1381,267 1387,252 1392,246 1397,253 1403,285 1410,318 1414,328 1419,324 1425,320 1430,328 1434,350 1440,405 1446,455 1452,498 1456,518 1462,501 1467,515 1471,545 1475,575 1478,581 1483,571 1488,566'] },
      { color: '#646464', width: 2, box: [100, 217, 1388, 870], runs: onAxis }
    ] },
  { id: 'filter', title: 'Filter', units: ['dB', 'deg'], left: [10, -5, 11], right: [180, -36, 11], minor: 5, box: [100, 73, 1391, 869], band: [245, 5],
    curves: [] },
  { id: 'directivity', title: 'Directivity (hor)', units: ['dB', ''], left: [5, -5, 9], minor: 5, zero: 1, box: [100, 79, 1388, 876],
    curves: [
      { color: '#30e010', runs: ['100,594 160,560 230,518 318,464 400,415 480,366 540,328 572,314 605,304 640,292 665,273 685,254 700,241 712,238 745,231 785,230 815,229 830,221 848,206 875,201 890,187 905,170 918,168 930,180 950,195 965,212 985,215 1002,213 1015,211 1028,220 1045,227 1065,233 1085,250 1100,277 1115,291 1132,293 1148,304 1165,313 1178,311 1198,328 1215,349 1232,356 1258,354 1274,374 1284,350 1290,321 1303,299 1310,312 1318,350 1326,400 1335,425 1346,418 1355,437 1368,467 1378,510 1387,573 1394,626 1402,642 1409,672 1416,650 1422,570 1428,530 1434,535 1440,590 1446,672 1450,620 1456,510 1463,450 1470,435 1474,450 1480,520 1484,548 1488,545'] },
      { color: '#10dc90', runs: ['100,582 160,548 230,506 318,452 400,402 480,357 540,319 570,305 605,297 635,285 660,264 680,242 695,226 706,219 740,216 785,215 812,212 828,202 850,188 868,186 880,178 892,165 905,158 915,155 928,167 945,182 955,200 968,212 1000,216 1020,214 1045,221 1065,217 1082,229 1098,253 1110,262 1132,262 1148,270 1165,281 1178,280 1200,297 1215,314 1230,318 1252,309 1262,316 1275,329 1284,315 1292,288 1302,270 1309,262 1316,270 1323,300 1330,337 1337,345 1348,337 1360,353 1372,378 1385,430 1395,486 1402,500 1408,517 1416,522 1424,512 1430,514 1434,506 1440,520 1446,541 1452,520 1458,480 1463,460 1470,452 1474,465 1480,535 1484,556 1488,540'] },
      { color: '#14b4dc', runs: ['100,558 150,532 230,487 318,434 400,386 422,374 480,341 520,317 545,302 575,292 605,285 630,274 655,252 675,229 692,213 706,205 725,205 780,203 815,197 830,188 850,178 875,175 890,165 900,157 910,154 920,157 935,174 945,180 955,195 963,212 975,218 995,223 1008,216 1020,216 1040,208 1055,196 1066,193 1078,199 1092,215 1105,228 1130,230 1145,245 1160,260 1175,265 1195,283 1210,291 1222,287 1235,270 1248,265 1262,271 1275,278 1288,264 1300,235 1308,223 1315,224 1323,245 1329,270 1337,277 1350,270 1365,287 1380,320 1392,367 1405,379 1415,390 1422,430 1428,470 1433,450 1438,412 1447,392 1452,415 1458,470 1465,515 1471,570 1475,670 1479,736 1483,700 1488,560'] },
      { color: '#4664f0', runs: ['100,565 160,531 230,490 318,434 400,384 422,371 480,337 520,312 545,295 575,285 605,278 630,265 655,243 675,220 692,202 706,195 725,197 780,197 815,193 845,181 870,178 890,168 905,163 918,168 935,181 948,195 958,212 975,217 995,217 1008,208 1020,194 1035,188 1050,181 1062,175 1072,185 1085,202 1100,219 1128,224 1143,240 1158,247 1190,247 1205,238 1222,229 1243,223 1258,228 1275,241 1285,231 1293,216 1305,202 1312,198 1320,206 1328,230 1336,236 1350,230 1365,240 1382,262 1392,273 1412,280 1420,297 1428,311 1436,295 1443,282 1448,268 1453,300 1458,318 1465,313 1470,340 1475,374 1480,390 1488,420'] },
      { color: '#a03cff', runs: ['100,548 150,519 230,474 318,421 380,386 422,360 470,332 510,308 535,292 563,279 590,270 610,264 630,254 650,239 668,219 682,203 694,190 706,185 720,187 745,189 790,188 830,184 860,181 885,178 907,178 920,184 940,195 952,204 965,206 985,201 1000,193 1015,182 1030,179 1050,178 1065,179 1075,190 1085,203 1100,209 1130,209 1148,213 1165,209 1185,204 1200,198 1222,200 1243,195 1255,199 1266,203 1276,201 1290,195 1303,197 1314,186 1322,190 1332,200 1345,203 1358,198 1375,208 1402,207 1416,214 1428,218 1436,209 1443,211 1449,202 1457,225 1465,211 1472,215 1480,231 1488,232'] }
    ] },
  { id: 'impedance', title: 'Impedance', units: ['ohm', 'deg'], left: [40, -5, 9], right: [120, -30, 9], minor: 5, box: [100, 79, 1391, 876],
    curves: [
      { color: '#808080', runs: ['100,844 170,842 240,839 318,833 380,826 430,818 480,806 515,794 540,779 562,753 572,725 582,680 590,590 596,500 601,420 606,360 611,334 616,330 621,338 628,380 634,430 640,510 647,590 655,650 665,682 680,699 697,705 715,704 735,697 760,687 785,674 810,658 825,645 833,630 840,617 846,624 850,638 857,644 867,640 885,628 915,610 950,591 980,586 1026,569 1080,551 1150,530 1210,515 1280,498 1350,480 1400,466 1450,448 1491,436'] },
      { color: '#5a5a5a', width: 2, runs: [
        '371,50 377,79 400,187 427,300 457,406 491,517 525,626 545,690 563,757 575,810 583,843 588,856 593,859 598,848 604,790 609,700 613,626 620,470 625,330 628,200 631,79 632,50',
        '652,50 654,79 660,180 670,300 680,395 692,465 703,517 718,568 738,620 757,653 775,680 795,704 815,720 827,729 836,730 841,712 846,698 849,696 856,708 866,725 885,742 905,752 925,757 945,760 960,758 980,762 1005,768 1050,772 1105,776 1160,777 1220,777 1280,774 1350,770 1400,765 1450,758 1491,751'] }
    ] }
];

const freqLabels = [[50, '50'], [100, '100'], [200, '200'], [500, '500'], [1000, '1k'], [2000, '2k'], [5000, '5k'], [10000, '10k'], [20000, '20k']];

function add(parent, name, attrs, text) {
  const el = document.createElementNS(NS, name);
  for (const key in attrs) el.setAttribute(key, attrs[key]);
  if (text !== undefined) el.textContent = text;
  parent.appendChild(el);
  return el;
}

// Monotone cubic interpolation, so that peaks do not overshoot.
function smooth(run, start) {
  const p = run.split(' ').map(s => s.split(',').map(Number));
  const n = p.length;
  const slope = [];
  for (let i = 0; i < n - 1; i++) slope.push((p[i + 1][1] - p[i][1]) / (p[i + 1][0] - p[i][0]));
  const m = p.map((_, i) => {
    if (i === 0) return slope[0];
    if (i === n - 1) return slope[n - 2];
    const a = slope[i - 1], b = slope[i];
    return a * b <= 0 ? 0 : 2 * a * b / (a + b);
  });
  let d = start + p[0][0] + ' ' + p[0][1];
  for (let i = 0; i < n - 1; i++) {
    const h = (p[i + 1][0] - p[i][0]) / 3;
    d += `C${p[i][0] + h} ${p[i][1] + h * m[i]} ${p[i + 1][0] - h} ${p[i + 1][1] - h * m[i + 1]} ${p[i + 1][0]} ${p[i + 1][1]}`;
  }
  return d;
}

function draw(chart) {
  const host = document.getElementById(chart.id);
  host.textContent = '';
  const w = host.clientWidth, h = host.clientHeight;
  const svg = add(host, 'svg', { width: w, height: h, role: 'img', 'aria-label': chart.title });
  const x0 = 32, y0 = 17, x1 = w - 32, y1 = h - 14;
  const fx = f => x0 + (x1 - x0) * Math.log10(f / 20) / 3;
  const px = v => Math.round(v) + 0.5;

  const [, , count] = chart.left;
  const rows = (count - 1) * chart.minor;
  let minor = '', major = '';
  for (let i = 1; i < rows; i++) {
    const line = `M${x0} ${px(y0 + (y1 - y0) * i / rows)}H${x1}`;
    if (i % chart.minor) minor += line; else major += line;
  }
  for (const decade of [10, 100, 1000, 10000]) {
    for (let k = 1; k < 10; k++) {
      const f = decade * k;
      if (f <= 20 || f >= 20000) continue;
      const line = `M${px(fx(f))} ${y0}V${y1}`;
      if (k === 1) major += line; else minor += line;
    }
  }
  add(svg, 'path', { class: 'grid-minor', d: minor });
  add(svg, 'path', { class: 'grid-major', d: major });
  add(svg, 'path', { class: 'frame', d: `M${x0 + .5} ${y0 + .5}H${x1 + .5}V${y1 + .5}H${x0 + .5}Z` });
  if (chart.zero) {
    const y = Math.round(y0 + (y1 - y0) * chart.zero / (count - 1)) + 1;
    add(svg, 'path', { class: 'zero', d: `M${x0} ${y}H${x1}` });
  }

  const frame = { x: x0, y: y0, width: x1 - x0 + 1, height: y1 - y0 + 1, preserveAspectRatio: 'none' };
  for (const curve of chart.curves) {
    const plot = add(svg, 'svg', { ...frame, viewBox: (curve.box || chart.box).join(' ') });
    const d = curve.runs.map((run, i) => smooth(run, i && curve.joined ? 'L' : 'M')).join('');
    add(plot, 'path', { class: 'curve', d, stroke: curve.color, 'stroke-width': curve.width || 1 });
  }
  if (chart.band) {
    const plot = add(svg, 'svg', { ...frame, viewBox: chart.box.join(' ') });
    const grad = add(plot, 'linearGradient', { id: 'band' });
    add(grad, 'stop', { offset: 0, 'stop-color': '#0000ff' });
    add(grad, 'stop', { offset: 0.5, 'stop-color': '#5a00e6' });
    add(grad, 'stop', { offset: 1, 'stop-color': '#a000c8' });
    add(plot, 'rect', { x: 100, y: chart.band[0], width: 1391, height: chart.band[1], fill: 'url(#band)' });
    add(plot, 'path', { d: 'M565 249H615L593 254Z', fill: '#7850dc' });
  }

  const scale = (axis, cls, x) => {
    const [top, step, n] = axis;
    for (let i = 0; i < n; i++) {
      add(svg, 'text', { class: cls, x, y: Math.round(y0 + (y1 - y0) * i / (n - 1)) + 4 }, top + step * i);
    }
  };
  scale(chart.left, 'axis-left', x0 - 3);
  if (chart.right) scale(chart.right, 'axis-right', x1 + 16);
  add(svg, 'text', { x: x0 - 7, y: y1 + 12 }, '20Hz');
  for (const [f, label] of freqLabels) add(svg, 'text', { class: 'axis-bottom', x: Math.round(fx(f)) + 1, y: y1 + 12 }, label);
  add(svg, 'text', { x: x0 + 2, y: y0 - 4 }, chart.units[0]);
  add(svg, 'text', { class: 'unit-right', x: x1 - 2, y: y0 - 4 }, chart.units[1]);
  add(svg, 'text', { class: 'chart-title', x: Math.round((x0 + x1) / 2), y: y0 - 3 }, chart.title);
}

const drawAll = () => charts.forEach(draw);
drawAll();
window.addEventListener('resize', drawAll);
```
